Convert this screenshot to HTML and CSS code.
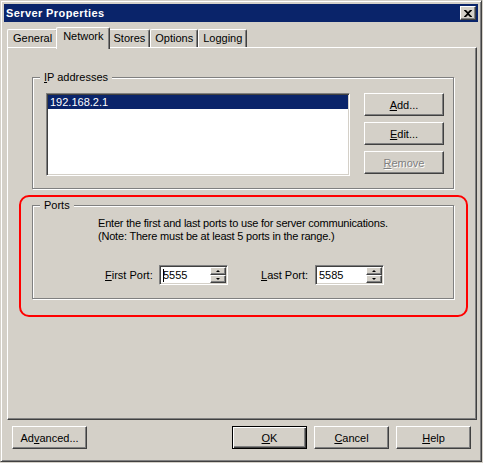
FILE: index.html
```html
<!DOCTYPE html>
<html lang="en">

<head>
    <meta charset="UTF-8">
    <meta name="viewport" content="width=device-width, initial-scale=1.0">
    <title>Server Properties</title>
    <link rel="stylesheet" href="styles.css">
</head>

<body>
    <div class="window">
        <div class="titleBar">
            <span class="title">Server Properties</span>
            <div class="closeBtn">
                <svg width="8" height="7" viewBox="0 0 8 7">
                    <path d="M0 0h2l2 2 2-2h2v0.5L5 3.5l3 3V7H6L4 5 2 7H0v-0.5l3-3L0 0.5z" fill="#000" />
                </svg>
            </div>
        </div>

        <div class="tabs">
            <div class="tab">General</div>
            <div class="tab active">Network</div>
            <div class="tab">Stores</div>
            <div class="tab">Options</div>
            <div class="tab">Logging</div>
        </div>

        <div class="panel">
            <div class="group ipGroup">
                <div class="groupLabel"><u>I</u>P addresses</div>
                <div class="ipBody">
                    <div class="listBox">
                        <div class="listItem selected">192.168.2.1</div>
                    </div>
                    <div class="sideButtons">
                        <div class="btn"><span><u>A</u>dd...</span></div>
                        <div class="btn"><span><u>E</u>dit...</span></div>
                        <div class="btn disabled"><span><u>R</u>emove</span></div>
                    </div>
                </div>
            </div>

            <div class="group portsGroup">
                <div class="groupLabel">Ports</div>
                <p class="note">Enter the first and last ports to use for server communications.<br>(Note: There must be at least 5 ports in the range.)</p>
                <div class="portRow">
                    <div class="portLabel"><u>F</u>irst Port:</div>
                    <div class="spin">
                        <span class="caret"></span>
                        <span class="spinValue">5555</span>
                        <div class="spinBtns">
                            <div class="spinBtn"><i class="arrowUp"></i></div>
                            <div class="spinBtn"><i class="arrowDown"></i></div>
                        </div>
                    </div>
                    <div class="portLabel lastLabel"><u>L</u>ast Port:</div>
                    <div class="spin">
                        <span class="spinValue">5585</span>
                        <div class="spinBtns">
                            <div class="spinBtn"><i class="arrowUp"></i></div>
                            <div class="spinBtn"><i class="arrowDown"></i></div>
                        </div>
                    </div>
                </div>
            </div>

            <!-- red marker drawn over the ports section -->
            <div class="highlight"></div>
        </div>

        <div class="footer">
            <div class="btn wide"><span>Ad<u>v</u>anced...</span></div>
            <div class="footerRight">
                <div class="btn wide default"><span><u>O</u>K</span></div>
                <div class="btn wide"><span><u>C</u>ancel</span></div>
                <div class="btn wide"><span><u>H</u>elp</span></div>
            </div>
        </div>
    </div>
</body>

</html>
```

FILE: styles.css
```css
* {
  margin: 0;
  padding: 0;
  box-sizing: border-box;
  font-family: "Liberation Sans", Arial, sans-serif;
}

body {
  background-color: #d4d0c8;
  font-size: 11px;
  color: #000;
}

u {
  text-decoration: underline;
  text-underline-offset: 1px;
}

.window {
  width: 482px;
  height: 462px;
  display: flex;
  flex-direction: column;
  padding: 3px;
  background-color: #d4d0c8;
  border: 1px solid;
  border-color: #d4d0c8 #404040 #404040 #d4d0c8;
  box-shadow: inset 1px 1px 0 #fff, inset -1px -1px 0 #808080;
}

/* title bar */
.titleBar {
  height: 18px;
  display: flex;
  align-items: center;
  justify-content: space-between;
  padding: 0 2px 0 2px;
  background-color: #0a246a;
}
.titleBar .title {
  color: #fff;
  font-weight: bold;
  font-size: 11px;
  letter-spacing: 0.4px;
}
.closeBtn {
  width: 16px;
  height: 14px;
  display: flex;
  align-items: center;
  justify-content: center;
  background-color: #d4d0c8;
  border: 1px solid;
  border-color: #fff #404040 #404040 #fff;
  box-shadow: inset -1px -1px 0 #808080;
}
.closeBtn svg {
  display: block;
}

/* tabs */
.tabs {
  height: 20px;
  margin-top: 5px;
  padding-left: 3px;
  display: flex;
  align-items: flex-end;
}
.tab {
  height: 18px;
  line-height: 17px;
  padding: 0 4px;
  border: 1px solid;
  border-bottom: none;
  border-color: #fff #404040 #fff #fff;
  border-radius: 2px 2px 0 0;
  box-shadow: inset -1px 0 0 #808080;
  background-color: #d4d0c8;
}
.tab:first-child {
  padding: 0 5px;
}
.tab.active {
  position: relative;
  z-index: 1;
  height: 22px;
  margin: 0 -2px -2px -2px;
  padding: 0 6px;
}

/* tab page */
.panel {
  position: relative;
  width: 470px;
  height: 373px;
  margin-left: 3px;
  border: 1px solid;
  border-color: #fff #404040 #404040 #fff;
  box-shadow: inset -1px -1px 0 #808080;
}

.group {
  width: 422px;
  margin-left: 24px;
  border: 1px solid #808080;
  box-shadow: 1px 1px 0 #fff, inset 1px 1px 0 #fff;
}
.groupLabel {
  width: fit-content;
  margin: -7px 0 0 7px;
  padding: 0 4px;
  line-height: 13px;
  background-color: #d4d0c8;
}

.ipGroup {
  height: 112px;
  margin-top: 29px;
}
.ipBody {
  display: flex;
  margin: 9px 0 0 13px;
}
.listBox {
  width: 304px;
  height: 83px;
  padding: 1px;
  background-color: #fff;
  border: 1px solid;
  border-color: #808080 #fff #fff #808080;
  box-shadow: inset 1px 1px 0 #404040, inset -1px -1px 0 #d4d0c8;
}
.listItem {
  height: 14px;
  line-height: 14px;
  padding-left: 2px;
}
.listItem.selected {
  background-color: #0a246a;
  color: #fff;
}
.sideButtons {
  display: flex;
  flex-direction: column;
  gap: 6px;
  margin-left: 14px;
}
.sideButtons .btn {
  width: 80px;
}

.btn {
  height: 23px;
  display: flex;
  align-items: center;
  justify-content: center;
  background-color: #d4d0c8;
  border: 1px solid;
  border-color: #fff #404040 #404040 #fff;
  box-shadow: inset -1px -1px 0 #808080;
}
.btn.disabled {
  color: #808080;
  text-shadow: 1px 1px 0 #fff;
}
.btn.wide {
  width: 75px;
}
.btn.default {
  border-color: #000;
  box-shadow: inset 1px 1px 0 #fff, inset -1px -1px 0 #404040, inset -2px -2px 0 #808080;
}

.portsGroup {
  height: 94px;
  margin-top: 16px;
}
.note {
  margin: 5px 0 0 65px;
  line-height: 13px;
  letter-spacing: -0.2px;
}
.portRow {
  display: flex;
  align-items: center;
  margin-top: 22px;
  padding-left: 72px;
}
.portLabel {
  width: 54px;
}
.lastLabel {
  margin-left: 33px;
}
.spin {
  width: 69px;
  height: 20px;
  display: flex;
  align-items: center;
  padding: 1px;
  background-color: #fff;
  border: 1px solid;
  border-color: #808080 #fff #fff #808080;
  box-shadow: inset 1px 1px 0 #404040, inset -1px -1px 0 #d4d0c8;
}
.spinValue {
  padding-left: 2px;
  font-size: 11px;
}
.caret {
  width: 1px;
  height: 13px;
  margin-left: 2px;
  margin-right: -3px;
  background-color: #000;
}
.spinBtns {
  margin-left: auto;
  display: flex;
  flex-direction: column;
}
.spinBtn {
  width: 16px;
  height: 8px;
  display: flex;
  align-items: center;
  justify-content: center;
  background-color: #d4d0c8;
  border: 1px solid;
  border-color: #fff #404040 #404040 #fff;
  box-shadow: inset -1px -1px 0 #808080;
}
.arrowUp,
.arrowDown {
  width: 0;
  height: 0;
  border-left: 2px solid transparent;
  border-right: 2px solid transparent;
}
.arrowUp {
  border-bottom: 2px solid #000;
}
.arrowDown {
  border-top: 2px solid #000;
}

.highlight {
  position: absolute;
  left: 11px;
  top: 147px;
  width: 449px;
  height: 122px;
  border: 2px solid #f00;
  border-radius: 10px;
  pointer-events: none;
}

/* dialog buttons */
.footer {
  display: flex;
  justify-content: space-between;
  margin-top: 6px;
  padding: 0 7px 0 8px;
}
.footerRight {
  display: flex;
  gap: 7px;
}
```
